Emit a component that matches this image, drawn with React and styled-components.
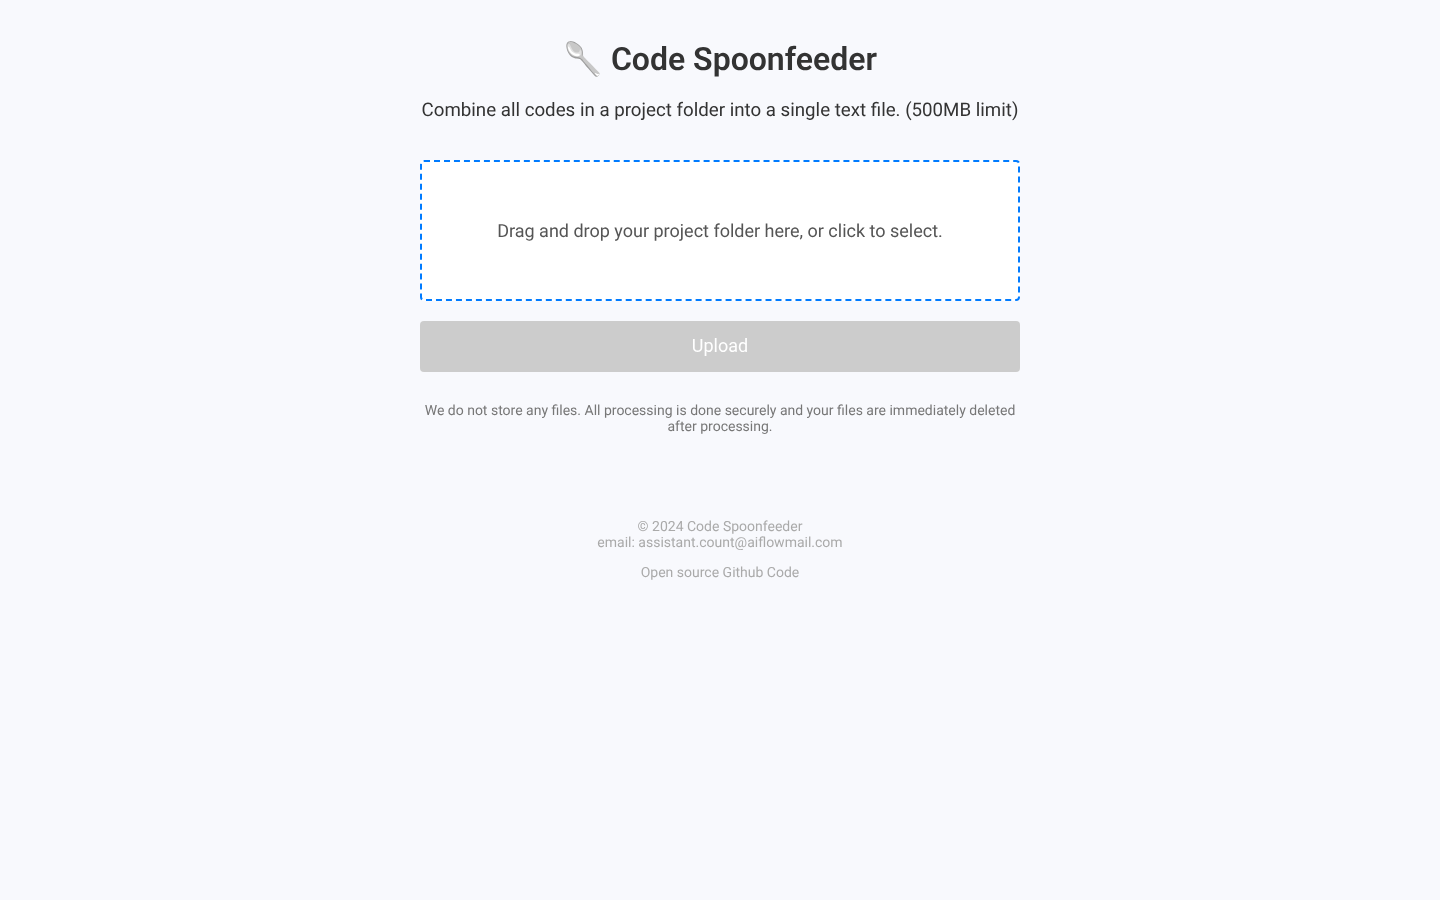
import React from "react";
import styled, { createGlobalStyle } from "styled-components";

const GlobalStyle = createGlobalStyle`
  html, body {
    margin: 0;
    padding: 0;
    min-height: 100%;
    background-color: #f8f9fd;
    font-family: Roboto, "Liberation Sans", sans-serif;
    text-rendering: geometricPrecision;
  }
`;

const App = () => {
  return (
    <Page>
      <GlobalStyle />
      <Title>🥄 Code Spoonfeeder</Title>
      <Subtitle>Combine all codes in a project folder into a single text file. (500MB limit)</Subtitle>
      <DropZone>
        <DropText>Drag and drop your project folder here, or click to select.</DropText>
      </DropZone>
      <UploadButton disabled>Upload</UploadButton>
      <Notice>
        We do not store any files. All processing is done securely and your files are immediately deleted after processing.
      </Notice>
      <Footer>
        <FooterLine>© 2024 Code Spoonfeeder</FooterLine>
        <FooterLine>email: assistant.count@aiflowmail.com</FooterLine>
        <FooterLink href="#">Open source Github Code</FooterLink>
      </Footer>
    </Page>
  );
};

const Page = styled.main`
  width: 600px;
  margin: 0 auto;
  padding-top: 40px;
  display: flex;
  flex-direction: column;
  text-align: center;
  will-change: transform;
`;
const Title = styled.h1`
  margin: 0;
  font-size: 32px;
  line-height: 38px;
  font-weight: 600;
  color: #333333;
`;
const Subtitle = styled.p`
  margin: 20px 0 0;
  font-size: 18.72px;
  line-height: 24px;
  color: #333333;
`;
const DropZone = styled.div`
  box-sizing: border-box;
  height: 141px;
  margin-top: 38px;
  padding-top: 2px;
  background-color: #ffffff;
  border: 2px dashed #007bff;
  border-radius: 4px;
  display: flex;
  align-items: center;
  justify-content: center;
`;
const DropText = styled.p`
  margin: 0;
  font-size: 18px;
  color: #555555;
`;
const UploadButton = styled.button`
  height: 51px;
  margin-top: 20px;
  padding-bottom: 3px;
  border: none;
  border-radius: 4px;
  background-color: #cccccc;
  color: #ffffff;
  font-family: inherit;
  font-size: 18px;
`;
const Notice = styled.p`
  margin: 31px 0 0;
  font-size: 14px;
  line-height: 16px;
  color: #777777;
`;
const Footer = styled.footer`
  margin-top: 84px;
  display: flex;
  flex-direction: column;
  font-size: 14px;
  line-height: 16px;
  color: #aaaaaa;
`;
const FooterLine = styled.span``;
const FooterLink = styled.a`
  margin-top: 14px;
  color: #aaaaaa;
  text-decoration: none;
`;

export default App;
